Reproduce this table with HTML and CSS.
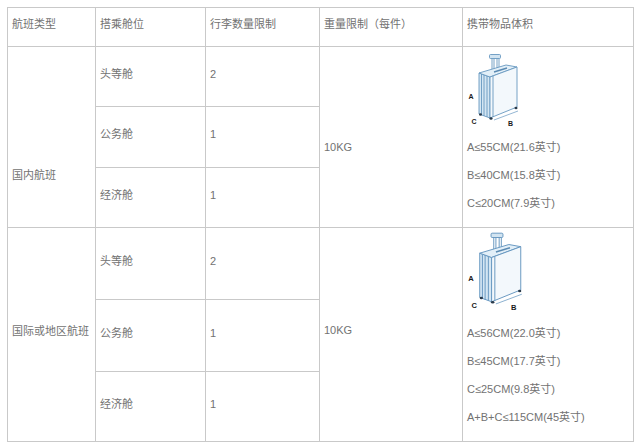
FILE: index.html
```html
<!DOCTYPE html>
<html lang="zh">
<head>
<meta charset="utf-8">
<title>行李限制</title>
<link rel="stylesheet" href="styles.css">
</head>
<body>
<div class="tbl">
  <div class="c">航班类型</div>
  <div class="c">搭乘舱位</div>
  <div class="c">行李数量限制</div>
  <div class="c">重量限制（每件）</div>
  <div class="c">携带物品体积</div>

  <div class="c s3 dom">国内航班</div>
  <div class="c">头等舱</div>
  <div class="c">2</div>
  <div class="c s3 kg1">10KG</div>
  <div class="c s3 vol">
    <svg class="bag1" width="62" height="86" viewBox="3 1 62 86">
      <use href="#bag"/>
    </svg>
    <p>A≤55CM(21.6英寸)</p>
    <p>B≤40CM(15.8英寸)</p>
    <p>C≤20CM(7.9英寸)</p>
  </div>
  <div class="c">公务舱</div>
  <div class="c">1</div>
  <div class="c">经济舱</div>
  <div class="c">1</div>

  <div class="c s3 intl">国际或地区航班</div>
  <div class="c">头等舱</div>
  <div class="c">2</div>
  <div class="c s3 kg2">10KG</div>
  <div class="c s3 vol">
    <svg class="bag2" width="68" height="91" viewBox="3.52 3.7 62.96 84.26">
      <use href="#bag"/>
    </svg>
    <p>A≤56CM(22.0英寸)</p>
    <p>B≤45CM(17.7英寸)</p>
    <p>C≤25CM(9.8英寸)</p>
    <p>A+B+C≤115CM(45英寸)</p>
  </div>
  <div class="c">公务舱</div>
  <div class="c">1</div>
  <div class="c">经济舱</div>
  <div class="c">1</div>
</div>

<svg class="defs" width="0" height="0">
  <defs>
    <g id="bag">
      <g fill="none" stroke="#6697c0" stroke-width="0.9" stroke-linejoin="round">
        <path d="M32 12.5V25 M34 12.5V25 M37 12.5V24 M39 12.5V24"/>
        <rect x="29.5" y="8.5" width="11" height="4" rx="1" fill="#d2e4f1"/>
        <path d="M19 27 L30 31 L30 72 L19 68 Z" fill="#d4e6f3"/>
        <path d="M21.5 28 V69 M24 29 V70 M27 30 V71"/>
        <path d="M19 27 L46 19 L57 21 L30 31 Z" fill="#e2eff8"/>
        <path d="M30 31 L57 21 L57 61 L30 72 Z" fill="#f3f8fc"/>
        <path d="M33 30 L33 71"/>
        <path d="M34 26 L47 22" stroke="#5a8ab2" stroke-width="1.4"/>
        <path d="M34 74 L58 65" stroke-width="0.7"/>
      </g>
      <g fill="#2a3a4a">
        <ellipse cx="20.5" cy="68.5" rx="1.5" ry="1.2"/>
        <ellipse cx="31" cy="72.5" rx="1.6" ry="1.2"/>
        <ellipse cx="56" cy="62" rx="1.5" ry="1.2"/>
      </g>
      <g font-family="Liberation Sans, sans-serif" font-size="7" font-weight="bold" fill="#1a1a1a">
        <text x="8.5" y="53">A</text>
        <text x="11.5" y="78">C</text>
        <text x="48" y="79.5">B</text>
      </g>
    </g>
  </defs>
</svg>
</body>
</html>
```

FILE: styles.css
```css
html, body {
  margin: 0;
  background: #ffffff;
}
body {
  padding: 7px;
}
.tbl {
  display: grid;
  grid-template-columns: 88px 110px 114px 143px 171px;
  grid-template-rows: 39px 60px 61px 60px 72px 72px 70px;
  width: max-content;
  border-left: 1px solid #c9c9c9;
  border-top: 1px solid #c9c9c9;
  font-family: "Liberation Sans", "Noto Sans CJK SC", sans-serif;
  font-size: 11px;
  color: #727272;
}
.c {
  box-sizing: border-box;
  border-right: 1px solid #c9c9c9;
  border-bottom: 1px solid #c9c9c9;
  display: flex;
  align-items: center;
  padding: 0 4px 6px 4px;
  line-height: 16px;
  white-space: nowrap;
}
.s3 {
  grid-row: span 3;
}
.dom {
  padding: 75px 4px 0 4px;
}
.kg1 {
  padding: 19px 4px 0 4px;
}
.intl {
  padding: 0 4px 8px 4px;
}
.kg2 {
  padding: 0 4px 10px 4px;
}
.vol {
  display: block;
  padding: 0 4px;
}
.vol p {
  margin: 0;
  line-height: 28px;
}
.vol svg {
  display: block;
  margin-left: -4px;
}
.defs {
  position: absolute;
  width: 0;
  height: 0;
  overflow: hidden;
}
```
